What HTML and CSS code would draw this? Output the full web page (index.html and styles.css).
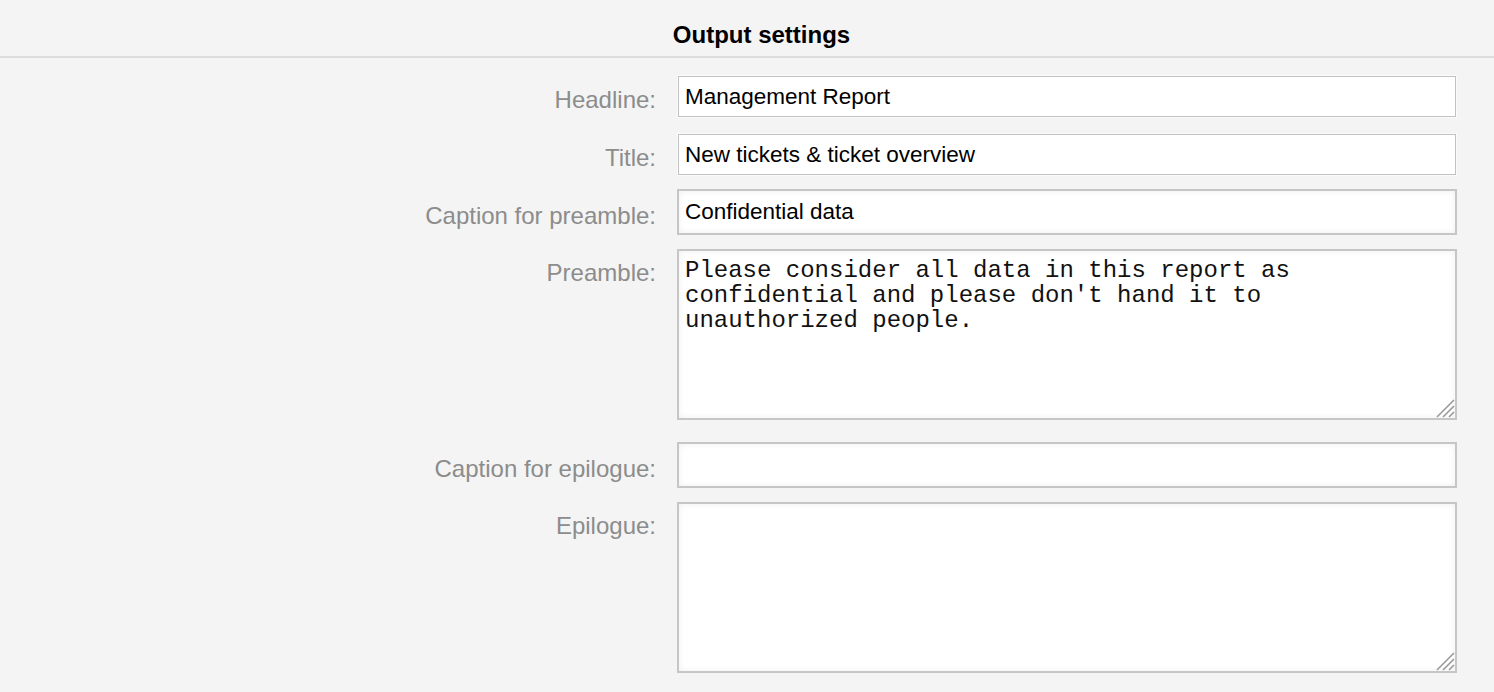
FILE: index.html
```html
<!DOCTYPE html>
<html lang="en">
<head>
<meta charset="utf-8">
<title>Output settings</title>
<link rel="stylesheet" href="styles.css">
</head>
<body>
<div class="page">
  <h2 class="section-title">Output settings</h2>
  <form class="settings">
    <div class="row row-first">
      <label class="label" for="headline">Headline:</label>
      <div class="field"><input class="input input-plain" id="headline" type="text" value="Management Report"></div>
    </div>
    <div class="row row-title">
      <label class="label" for="title">Title:</label>
      <div class="field"><input class="input input-plain" id="title" type="text" value="New tickets &amp; ticket overview"></div>
    </div>
    <div class="row row-cap-pre">
      <label class="label label-inset" for="cappre">Caption for preamble:</label>
      <div class="field"><input class="input input-inset" id="cappre" type="text" value="Confidential data"></div>
    </div>
    <div class="row row-pre">
      <label class="label label-area" for="pre">Preamble:</label>
      <div class="field field-area">
        <textarea class="area" id="pre">Please consider all data in this report as confidential and please don't hand it to unauthorized people.</textarea>
        <svg class="grip" width="20" height="20" viewBox="0 0 20 20" aria-hidden="true">
          <path d="M19 2 L2 19 M19 8 L8 19 M19 14 L14 19" stroke="#9a9a9a" stroke-width="1.6" fill="none"/>
        </svg>
      </div>
    </div>
    <div class="row row-cap-epi">
      <label class="label label-inset" for="capepi">Caption for epilogue:</label>
      <div class="field"><input class="input input-inset" id="capepi" type="text" value=""></div>
    </div>
    <div class="row row-epi">
      <label class="label label-area" for="epi">Epilogue:</label>
      <div class="field field-area">
        <textarea class="area" id="epi"></textarea>
        <svg class="grip" width="20" height="20" viewBox="0 0 20 20" aria-hidden="true">
          <path d="M19 2 L2 19 M19 8 L8 19 M19 14 L14 19" stroke="#9a9a9a" stroke-width="1.6" fill="none"/>
        </svg>
      </div>
    </div>
  </form>
</div>
</body>
</html>
```

FILE: styles.css
```css
html, body {
  margin: 0;
  padding: 0;
  background: #f4f4f4;
}

body {
  font-family: "Liberation Sans", Arial, sans-serif;
  color: #000;
  overflow: hidden;
}

.page {
  width: 1494px;
  height: 692px;
}

.section-title {
  margin: 0;
  padding: 20px 0 6px 29px;
  font-size: 24px;
  line-height: 30px;
  font-weight: bold;
  text-align: center;
  border-bottom: 2px solid #dcdcdc;
}

.settings {
  margin: 0;
  padding-top: 17px;
}

.row {
  display: grid;
  grid-template-columns: 656px 780px;
  column-gap: 21px;
  align-items: start;
}

.row-title { margin-top: 15px; }
.row-cap-pre { margin-top: 13px; }
.row-pre { margin-top: 14px; }
.row-cap-epi { margin-top: 22px; }
.row-epi { margin-top: 14px; }

.label {
  display: block;
  text-align: right;
  font-size: 24px;
  line-height: 28px;
  color: #8c8c8c;
  padding-top: 11px;
}

.label-inset { padding-top: 13px; }
.label-area { padding-top: 10px; }

.field {
  display: flex;
}

.field-area {
  position: relative;
}

.input {
  display: block;
  box-sizing: border-box;
  font-family: "Liberation Sans", Arial, sans-serif;
  font-size: 22.5px;
  color: #000;
  background: #fff;
  margin: 0;
  outline: none;
}

.input-plain {
  width: 778px;
  height: 41px;
  margin: 1px;
  border: 1px solid #c2c2c2;
  box-shadow: 0 0 0 1px #fbfbfb;
  padding: 0 6px;
}

.input-inset {
  width: 780px;
  height: 46px;
  border: 2px solid #c6c6c6;
  padding: 0 6px;
  box-shadow: inset 0 0 6px rgba(0, 0, 0, 0.07);
}

.area {
  display: block;
  box-sizing: border-box;
  width: 780px;
  height: 171px;
  margin: 0;
  border: 2px solid #c6c6c6;
  padding: 7px 20px 5px 6px;
  background: #fff;
  box-shadow: inset 0 0 6px rgba(0, 0, 0, 0.07);
  font-family: "Liberation Mono", "Courier New", monospace;
  font-size: 24px;
  line-height: 25px;
  color: #111;
  resize: none;
  overflow: hidden;
  outline: none;
}

.grip {
  position: absolute;
  right: 2px;
  bottom: 2px;
  pointer-events: none;
}
```
